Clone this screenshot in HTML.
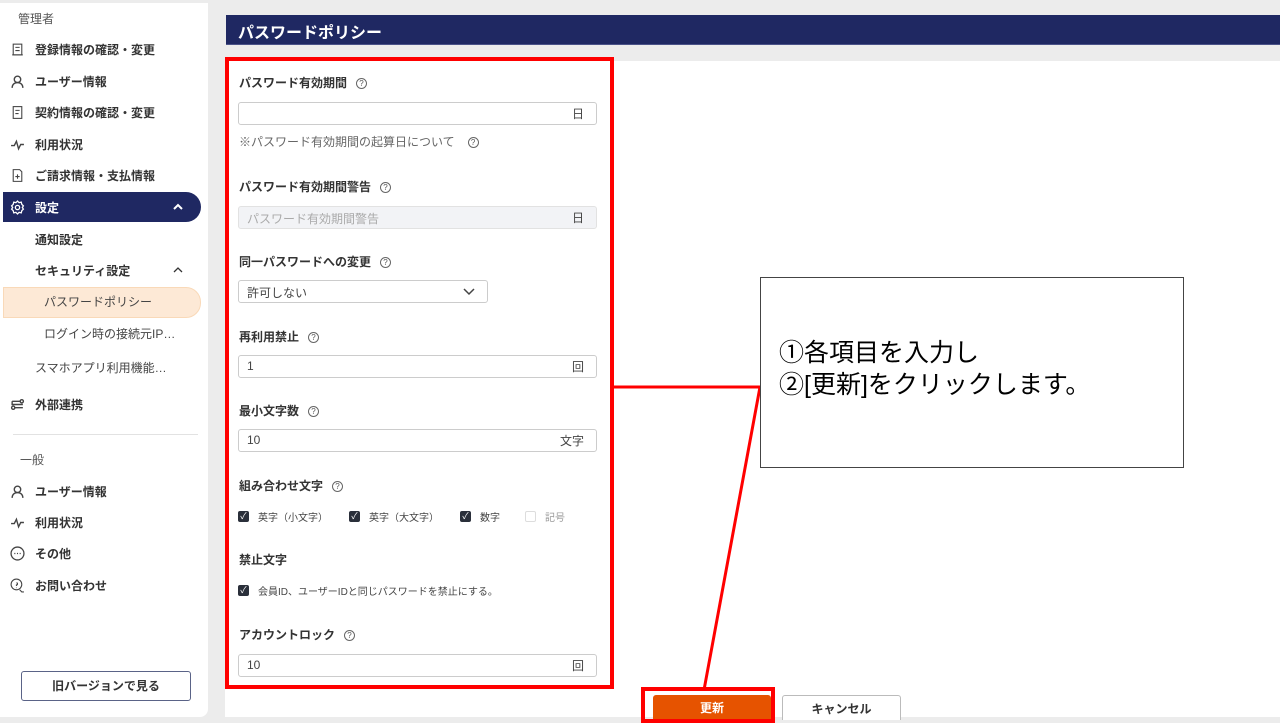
<!DOCTYPE html>
<html><head><meta charset="utf-8"><style>
*{margin:0;padding:0;box-sizing:border-box}
body{width:1280px;height:720px;overflow:hidden;background:#ececec;font-family:"Liberation Sans","Noto Sans CJK JP",sans-serif;color:#333;position:relative}
.a{position:absolute}
.side{left:0;top:3px;width:208px;height:714px;background:#fff;border-radius:0 0 8px 0}
.nav{position:absolute;left:10px;font-size:12px;font-weight:bold;color:#333;display:flex;align-items:center}
.nav svg{width:15px;height:15px;margin-right:10px}
.sub{position:absolute;font-size:12px;font-weight:bold;color:#333}
.lbl{position:absolute;left:239px;font-size:12px;font-weight:bold;color:#333}
.q{display:inline-block;width:11px;height:11px;border:1px solid #666;border-radius:50%;font-size:8px;line-height:9px;text-align:center;font-weight:normal;margin-left:9px;vertical-align:1px;color:#555}
.inp{position:absolute;left:238px;width:359px;height:23px;border:1px solid #ccc;border-radius:3px;background:#fff;font-size:12px;color:#444;padding:3px 8px}
.inp .u{position:absolute;right:12px;top:2px;color:#444}
.cb{position:absolute;font-size:10px;color:#444;display:flex;align-items:center}
.cb i{display:inline-block;width:11px;height:11px;background:#2a2f3a;border-radius:2px;margin-right:9px;color:#fff;font-style:normal;font-size:9px;line-height:11px;text-align:center}
.cb i.off{background:#fff;border:1px solid #ddd}
</style></head><body>
<div class="a side"></div>
<div class="a" style="left:18px;top:10px;font-size:12px;color:#555">管理者</div>
<div class="nav" style="top:41px"><svg viewBox="0 0 14 14" fill="none" stroke="#444"><rect x="3" y="2" width="8" height="10"/><path d="M5 5h4M5 8h4M2 12h10"/></svg>登録情報の確認・変更</div>
<div class="nav" style="top:73px"><svg viewBox="0 0 14 14" fill="none" stroke="#444" stroke-width="1.3"><circle cx="7" cy="5" r="3"/><path d="M2 13c0-3 2-5 5-5s5 2 5 5"/></svg>ユーザー情報</div>
<div class="nav" style="top:104px"><svg viewBox="0 0 14 14" fill="none" stroke="#444"><rect x="3" y="1.5" width="8" height="11"/><path d="M5 5h4M5 8h3"/></svg>契約情報の確認・変更</div>
<div class="nav" style="top:136px"><svg viewBox="0 0 14 14" fill="none" stroke="#444" stroke-width="1.3"><path d="M1 8h3l2-4 2 7 2-4h3"/></svg>利用状況</div>
<div class="nav" style="top:167px"><svg viewBox="0 0 14 14" fill="none" stroke="#444"><path d="M3 1.5h6l2 2v9H3z"/><path d="M7 6v4M5 8h4"/></svg>ご請求情報・支払情報</div>
<div class="a" style="left:3px;top:192px;width:198px;height:30px;background:#1f2862;border-radius:0 15px 15px 0"></div>
<div class="nav" style="top:199px;color:#fff"><svg viewBox="0 0 14 14" fill="none" stroke="#fff" stroke-width="1.2"><circle cx="7" cy="7" r="2"/><path d="M7 1l1.5 1.5 2-.5.5 2 1.5 1.5-1 1.5 1 1.5-1.5 1.5-.5 2-2-.5L7 13l-1.5-1.5-2 .5-.5-2L1.5 8.5l1-1.5-1-1.5L3 4l.5-2 2 .5z"/></svg>設定</div>
<svg class="a" style="left:172px;top:202px" width="12" height="10"><path d="M2 7l4-4 4 4" fill="none" stroke="#fff" stroke-width="2"/></svg>
<div class="sub" style="left:35px;top:231px">通知設定</div>
<div class="sub" style="left:35px;top:262px">セキュリティ設定</div>
<svg class="a" style="left:172px;top:265px" width="12" height="10"><path d="M2 7l4-4 4 4" fill="none" stroke="#333" stroke-width="1.3"/></svg>
<div class="a" style="left:3px;top:287px;width:198px;height:31px;background:#fde9d6;border:1px solid #f9d9b8;border-radius:0 15px 15px 0"></div>
<div class="a" style="left:44px;top:293px;font-size:12px;color:#444">パスワードポリシー</div>
<div class="a" style="left:44px;top:325px;font-size:12px;color:#444">ログイン時の接続元IP…</div>
<div class="a" style="left:35px;top:359px;font-size:12px;color:#444">スマホアプリ利用機能…</div>
<div class="nav" style="top:396px"><svg viewBox="0 0 14 14" fill="none" stroke="#444" stroke-width="1.3"><path d="M2 4h8M4 10h8"/><circle cx="11" cy="4" r="1.5"/><circle cx="3" cy="10" r="1.5"/><path d="M2 4v3h10"/></svg>外部連携</div>
<div class="a" style="left:13px;top:434px;width:185px;height:1px;background:#e2e2e2"></div>
<div class="a" style="left:20px;top:451px;font-size:12px;color:#555">一般</div>
<div class="nav" style="top:483px"><svg viewBox="0 0 14 14" fill="none" stroke="#444" stroke-width="1.3"><circle cx="7" cy="5" r="3"/><path d="M2 13c0-3 2-5 5-5s5 2 5 5"/></svg>ユーザー情報</div>
<div class="nav" style="top:514px"><svg viewBox="0 0 14 14" fill="none" stroke="#444" stroke-width="1.3"><path d="M1 8h3l2-4 2 7 2-4h3"/></svg>利用状況</div>
<div class="nav" style="top:545px"><svg viewBox="0 0 14 14" fill="none" stroke="#444" stroke-width="1.2"><circle cx="7" cy="7" r="6"/><path d="M4 7h1M6.5 7h1M9 7h1"/></svg>その他</div>
<div class="nav" style="top:577px"><svg viewBox="0 0 14 14" fill="none" stroke="#444"><circle cx="6" cy="6" r="5"/><path d="M6 4.5a1 1 0 1 1 0 2v1M6 9v.5M9 11l2 2h2"/></svg>お問い合わせ</div>
<div class="a" style="left:21px;top:671px;width:170px;height:30px;border:1px solid #5a6387;border-radius:3px;font-size:12px;font-weight:bold;text-align:center;line-height:28px;color:#333">旧バージョンで見る</div>

<div class="a" style="left:226px;top:15px;width:1054px;height:30px;background:#1f2862;border-bottom:1px solid #4a5288"></div>
<div class="a" style="left:238px;top:19px;font-size:16px;font-weight:bold;color:#fff">パスワードポリシー</div>
<div class="a" style="left:225px;top:61px;width:1055px;height:656px;background:#fff"></div>

<div class="lbl" style="top:74px">パスワード有効期間<span class="q">?</span></div>
<div class="inp" style="top:102px"><span class="u">日</span></div>
<div class="a" style="left:239px;top:133px;font-size:12px;color:#666">※パスワード有効期間の起算日について<span class="q" style="margin-left:13px">?</span></div>
<div class="lbl" style="top:178px">パスワード有効期間警告<span class="q">?</span></div>
<div class="inp" style="top:206px;background:#f2f3f6;color:#aaa;border-color:#e2e2e2">パスワード有効期間警告<span class="u">日</span></div>
<div class="lbl" style="top:253px">同一パスワードへの変更<span class="q">?</span></div>
<div class="inp" style="top:280px;width:250px">許可しない<svg class="a" style="right:12px;top:7px" width="12" height="8"><path d="M1 1l5 5 5-5" fill="none" stroke="#444" stroke-width="1.5"/></svg></div>
<div class="lbl" style="top:328px">再利用禁止<span class="q">?</span></div>
<div class="inp" style="top:355px">1<span class="u">回</span></div>
<div class="lbl" style="top:402px">最小文字数<span class="q">?</span></div>
<div class="inp" style="top:429px">10<span class="u">文字</span></div>
<div class="lbl" style="top:477px">組み合わせ文字<span class="q">?</span></div>
<div class="cb" style="left:238px;top:509px"><i>✓</i>英字（小文字）</div>
<div class="cb" style="left:349px;top:509px"><i>✓</i>英字（大文字）</div>
<div class="cb" style="left:460px;top:509px"><i>✓</i>数字</div>
<div class="cb" style="left:525px;top:509px;color:#999"><i class="off"></i>記号</div>
<div class="lbl" style="top:551px">禁止文字</div>
<div class="cb" style="left:238px;top:583px"><i>✓</i>会員ID、ユーザーIDと同じパスワードを禁止にする。</div>
<div class="lbl" style="top:626px">アカウントロック<span class="q">?</span></div>
<div class="inp" style="top:654px">10<span class="u">回</span></div>

<div class="a" style="left:653px;top:695px;width:118px;height:25px;background:#e65300;border-radius:3px 3px 0 0;color:#fff;font-size:12px;font-weight:bold;text-align:center;line-height:26px">更新</div>
<div class="a" style="left:782px;top:695px;width:119px;height:25px;background:#fff;border:1px solid #bbb;border-bottom:none;border-radius:3px 3px 0 0;font-size:12px;font-weight:bold;text-align:center;line-height:26px">キャンセル</div>

<div class="a" style="left:225px;top:57px;width:389px;height:632px;border:4px solid #f00"></div>
<div class="a" style="left:641px;top:687px;width:134px;height:36px;border:4px solid #f00"></div>
<svg class="a" style="left:0;top:0" width="1280" height="720"><path d="M613 387H760L704 690" fill="none" stroke="#f00" stroke-width="3"/></svg>
<div class="a" style="left:760px;top:277px;width:424px;height:191px;background:#fff;border:1px solid #444"></div>
<div class="a" style="left:779px;top:337px;font-size:25px;line-height:32px;color:#000">①各項目を入力し<br>②[更新]をクリックします。</div>
</body></html>
